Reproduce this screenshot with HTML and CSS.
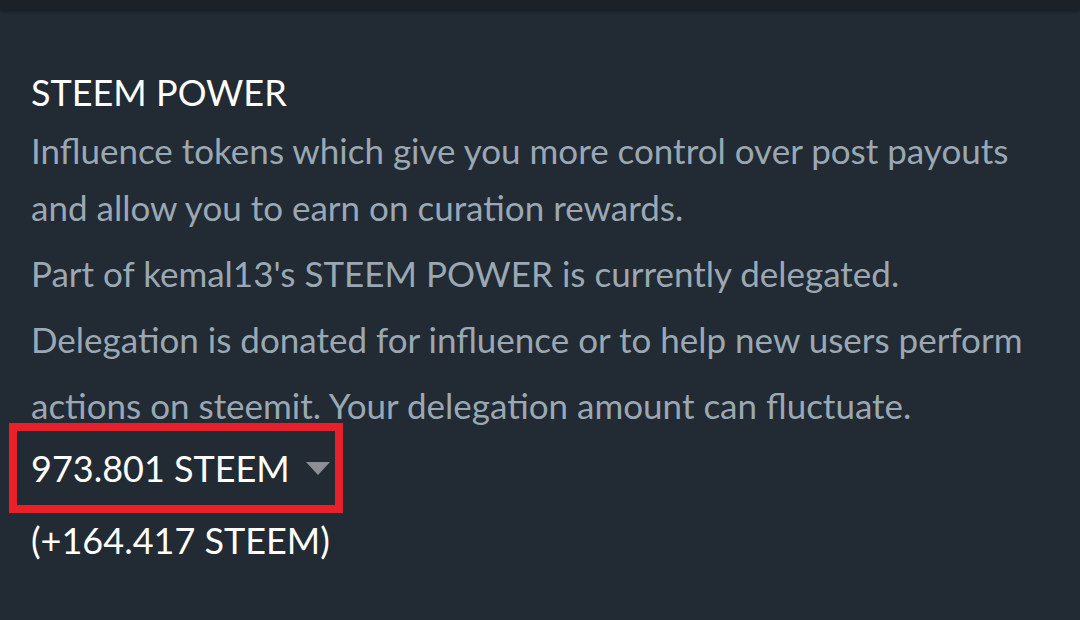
FILE: index.html
```html
<!DOCTYPE html>
<html lang="en">
<head>
    <meta charset="UTF-8">
    <meta name="viewport" content="width=device-width, initial-scale=1.0">
    <title>Steem Power</title>
    <link rel="stylesheet" href="styles.css">
</head>
<body>
    <div class="topbar"></div>

    <div class="wallet-row">
        <h2 class="row-title">STEEM POWER</h2>
        <p class="row-desc">Influence tokens which give you more control over post payouts<br>and allow you to earn on curation rewards.</p>
        <p class="row-note">Part of kemal13's STEEM POWER is currently delegated.<br>Delegation is donated for influence or to help new users perform<br>actions on steemit. Your delegation amount can fluctuate.</p>

        <div class="amount-box">
            <span class="amount">973.801 STEEM</span>
            <span class="caret"></span>
        </div>
        <div class="delegated">(+164.417 STEEM)</div>
    </div>
</body>
</html>
```

FILE: styles.css
```css
body {
    margin: 0;
    padding: 0;
    background-color: #222a33;
    font-family: Lato, "Open Sans", sans-serif;
    color: #9aa8b4;
    height: 620px;
    overflow: hidden;
}
.topbar {
    height: 10px;
    background-color: #1c2128;
    box-shadow: 0 2px 3px rgba(0,0,0,0.25);
}
.wallet-row {
    padding: 58px 0 0 31px;
}
.row-title {
    margin: 0;
    font-size: 36px;
    font-weight: normal;
    line-height: 48px;
    color: #fff;
}
.row-desc {
    margin: 6px 0 0;
    font-size: 35px;
    line-height: 57px;
}
.row-note {
    margin: 4px 0 0;
    font-size: 35px;
    line-height: 66px;
}
.amount-box {
    display: inline-flex;
    align-items: center;
    margin: -15px 0 0 -22px;
    padding: 6px 5px 6px 14px;
    border: 8px solid #e8202a;
    color: #fff;
    font-size: 36px;
    line-height: 62px;
}
.caret {
    width: 0;
    height: 0;
    margin-left: 16px;
    border-left: 12px solid transparent;
    border-right: 12px solid transparent;
    border-top: 13px solid #8c9096;
}
.delegated {
    color: #fff;
    font-size: 36px;
    line-height: 54px;
}
```
